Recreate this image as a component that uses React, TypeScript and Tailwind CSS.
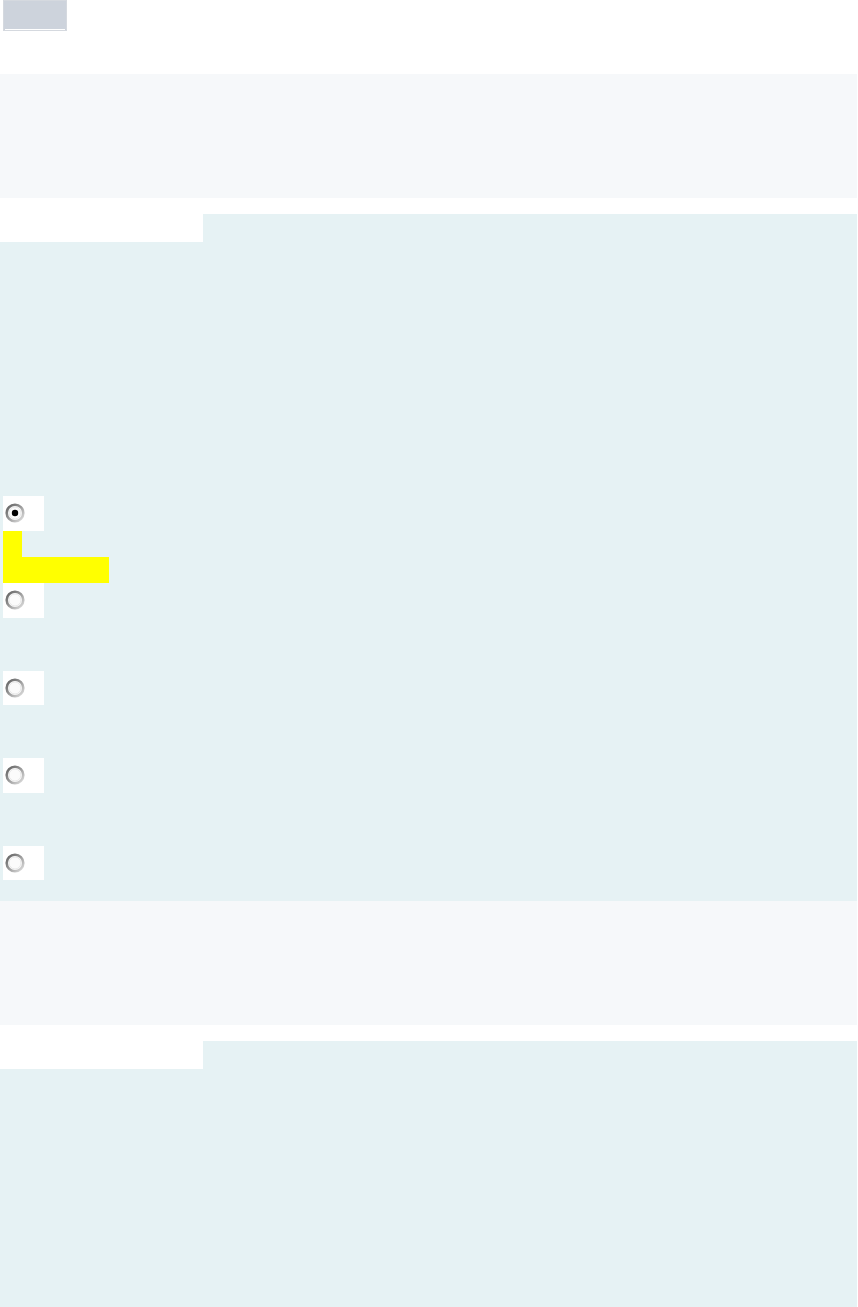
import React from 'react';

const Radio: React.FC<{ checked?: boolean }> = ({ checked }) => (
  <svg width="20" height="20" viewBox="0 0 20 20">
    <defs>
      <linearGradient id={checked ? 'rc' : 'ru'} x1="0" y1="0" x2="1" y2="1">
        <stop offset="0" stopColor="#5f5f5f" />
        <stop offset="0.45" stopColor="#959595" />
        <stop offset="1" stopColor="#e2e2e2" />
      </linearGradient>
    </defs>
    <circle cx="10" cy="10" r="8.3" fill="#fbfbfb" stroke={`url(#${checked ? 'rc' : 'ru'})`} strokeWidth="2.6" />
    <circle cx="10" cy="10" r="6" fill="none" stroke="#e8e8e8" strokeWidth="1" />
    {checked && <circle cx="10" cy="10" r="3.2" fill="#000" />}
  </svg>
);

const RadioBox: React.FC<{ checked?: boolean; h: string; mt?: string }> = ({ checked, h, mt }) => (
  <div className={`ml-[3px] w-[41px] bg-white pl-[2px] pt-[7px] ${h} ${mt ?? ''}`}>
    <Radio checked={checked} />
  </div>
);

const Band = () => <div className="h-[124px] w-[857px] bg-[#f6f8fa]" />;

const Tab = () => (
  <div className="flex h-[28px]">
    <div className="w-[203px] bg-white" />
    <div className="flex-1 bg-[#e6f2f4]" />
  </div>
);

export default function App() {
  return (
    <div className="min-h-[1307px] w-[858px] bg-white">
      {/* toolbar button */}
      <div className="ml-[3px] h-[31px] w-[64px] border border-[#d5d9df] bg-[#cdd3dc] p-0">
        <div className="mx-[1px] mt-[28px] h-[1px] bg-white" />
      </div>

      <div className="mt-[43px]">
        <Band />
      </div>

      {/* first panel */}
      <div className="mt-[16px] w-[857px]">
        <Tab />
        <div className="flex flex-col bg-[#e6f2f4] pb-[21px] pt-[254px]">
          <RadioBox checked h="h-[35px]" />
          <div className="ml-[3px] h-[26px] w-[19px] bg-[#ffff00]" />
          <div className="ml-[3px] h-[26px] w-[106px] bg-[#ffff00]" />
          <RadioBox h="h-[35px]" />
          <RadioBox h="h-[34px]" mt="mt-[53px]" />
          <RadioBox h="h-[35px]" mt="mt-[53px]" />
          <RadioBox h="h-[34px]" mt="mt-[53px]" />
        </div>
      </div>

      <Band />

      {/* second panel */}
      <div className="mt-[16px] w-[857px]">
        <Tab />
        <div className="h-[238px] bg-[#e6f2f4]" />
      </div>
    </div>
  );
}
